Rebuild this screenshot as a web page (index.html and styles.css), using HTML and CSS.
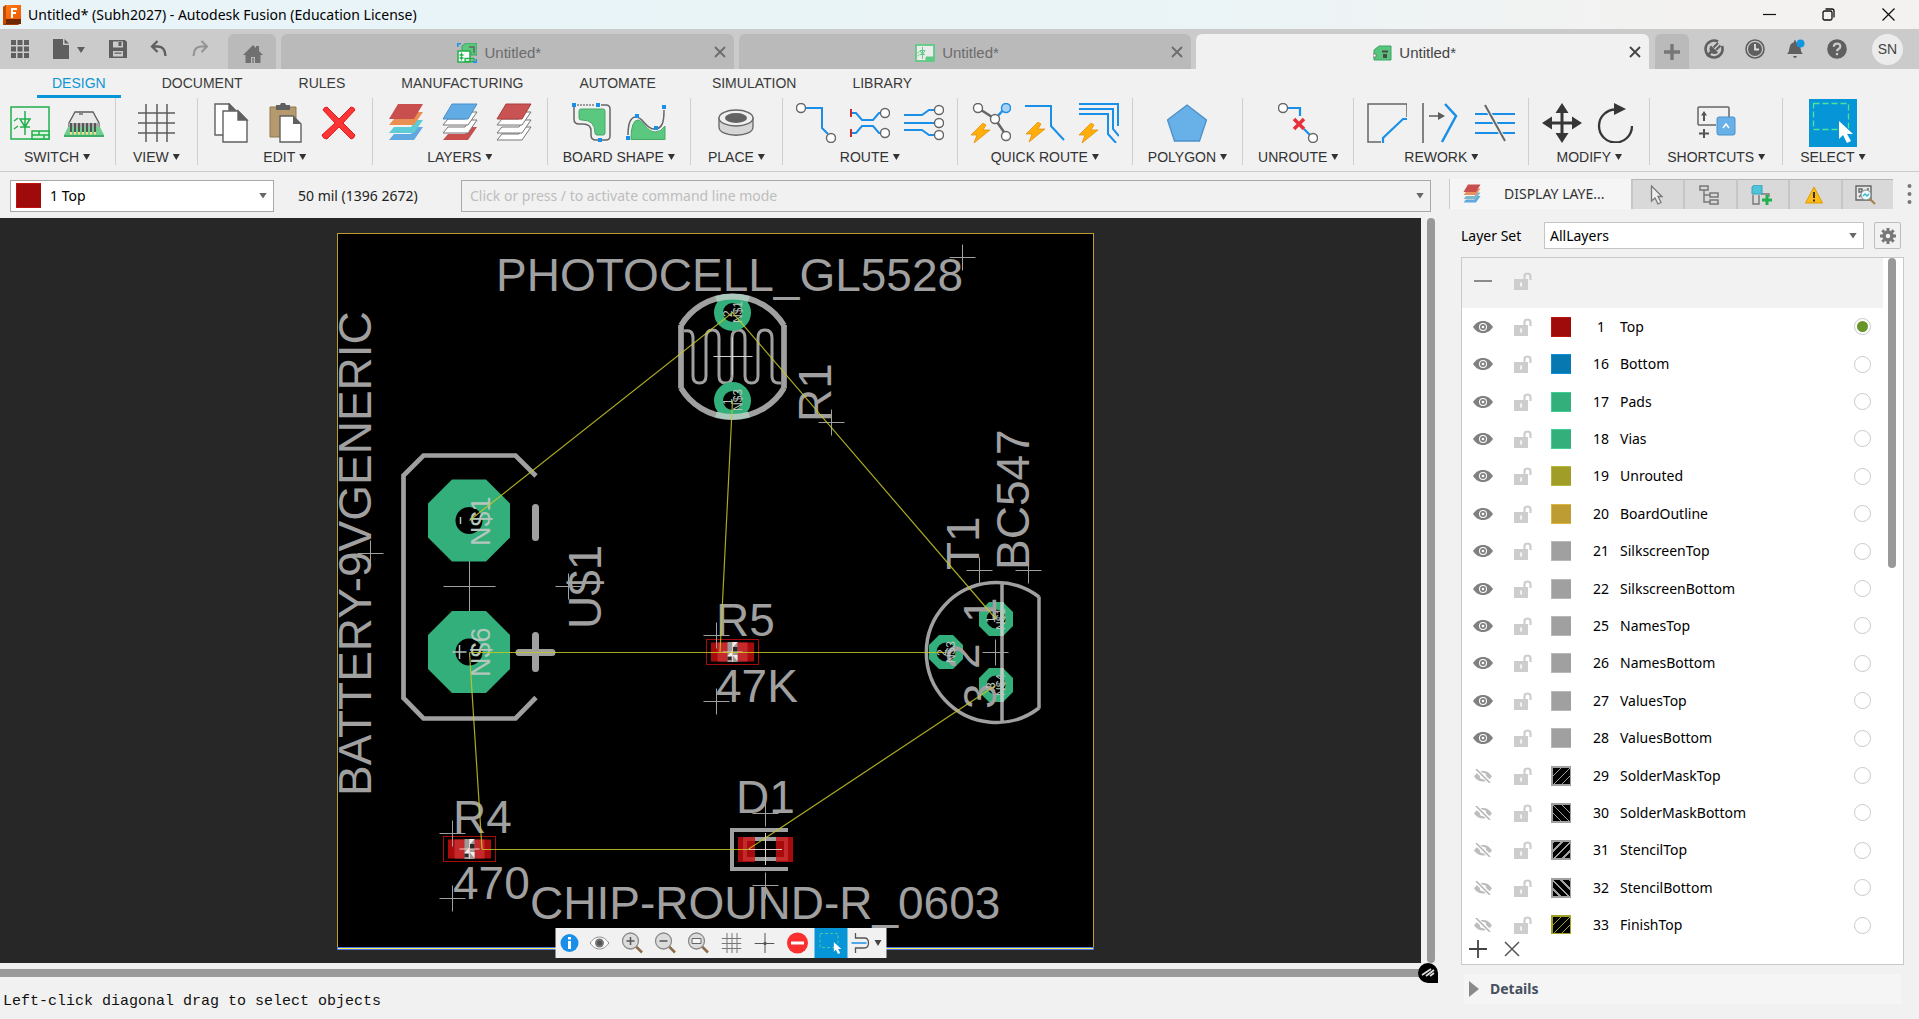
FILE: index.html
```html
<!DOCTYPE html>
<html lang="en">
<head>
<meta charset="utf-8">
<title>Untitled* (Subh2027) - Autodesk Fusion (Education License)</title>
<link rel="stylesheet" href="styles.css">
</head>
<body>
<svg class="defs" aria-hidden="true">
  <defs>
    <linearGradient id="appOrange" x1="0" y1="0" x2="1" y2="1"><stop offset="0" stop-color="#ff7a1a"/><stop offset="1" stop-color="#f05a00"/></linearGradient>
    <symbol id="eye" viewBox="0 0 20 14"><path d="M0 7C3 2.500 6.500 1 10 1s7 1.500 10 6c-3 4.500-6.500 6-10 6S3 11.500 0 7z" fill="#808080"/><circle cx="10" cy="7" r="4" fill="#fff"/><circle cx="10" cy="7" r="3" fill="#808080"/><circle cx="10" cy="7" r="1.300" fill="#fff"/></symbol>
    <symbol id="eyeoff" viewBox="0 0 20 14"><path d="M1 7.500C4 3 7 2 10 2s6 1 9 5.500C16 11.500 13 12.500 10 12.500S4 11.500 1 7.500z" fill="#bdbdbd"/><circle cx="10" cy="7" r="3.200" fill="#fff"/><circle cx="10" cy="7" r="2" fill="#bdbdbd"/><path d="M2 0l16 14" stroke="#fff" stroke-width="4"/><path d="M3 0l14 14" stroke="#b5b5b5" stroke-width="1.500"/></symbol>
    <symbol id="lock" viewBox="0 0 18 18"><path d="M0 7h14v11H0z" fill="#cdcdcd"/><path d="M10.500 7V4.500a3 3 0 0 1 6 0V8" fill="none" stroke="#cdcdcd" stroke-width="2.200"/><path d="M6.300 10.500h1.600v4H6.300z" fill="#fff"/></symbol>
    <symbol id="bolt" viewBox="0 0 19 20"><path d="M12 0L0 12h6L3 20 19 7h-7l3-5z" fill="#ffae0a" stroke="#e08a00" stroke-width=".7"/></symbol>
    <symbol id="strip" viewBox="0 0 40 16"><path d="M30 1h7l-9 13H3l5-6h17z"/></symbol>
    <symbol id="cursor" viewBox="0 0 14 22"><path d="M0 0v18l4-4 4 8 4-2-4-7h6z"/></symbol>
    <symbol id="mag" viewBox="0 0 22 22"><path d="M14 14l6.500 6.500" stroke="#8c6a45" stroke-width="2.500"/><circle cx="9" cy="9" r="8" fill="#dcdcdc" stroke="#8a8a8a" stroke-width="1.300"/></symbol>
    <symbol id="x" viewBox="0 0 12 12"><path d="M1 1l10 10M11 1L1 11" fill="none" stroke="currentColor" stroke-width="1.800"/></symbol>
  </defs>
</svg>

<header class="titlebar">
  <svg class="app-icon" width="18" height="20" viewBox="0 0 18 20"><path d="M0 2l3-2h15v18l-3 2H0z" fill="#a33c00"/><path d="M3 0h15v14H3z" fill="url(#appOrange)"/><path d="M0 2l3-2v18l-3 2z" fill="#c84a00"/><path d="M3 14h15v5H3z" fill="#6d2800"/><path d="M8 3h6v2h-4v2h3v2h-3v4H8z" fill="#fff"/></svg>
  <h1>Untitled* (Subh2027) - Autodesk Fusion (Education License)</h1>
  <div class="window-controls">
    <button type="button" aria-label="Minimize"><svg width="13" height="13"><path d="M0 6.500h13" stroke="#111" stroke-width="1.200"/></svg></button>
    <button type="button" aria-label="Restore"><svg width="13" height="13" fill="none" stroke="#111" stroke-width="1.300"><rect x="1" y="3" width="9" height="9" rx="1.500"/><path d="M3.500 1h6.500q2 0 2 2v6.500"/></svg></button>
    <button type="button" aria-label="Close"><svg width="13" height="13"><path d="M.5.500l12 12M12.500.500l-12 12" stroke="#111" stroke-width="1.300"/></svg></button>
  </div>
</header>

<div class="tabbar">
  <div class="quick">
    <button type="button" class="q-grid" aria-label="Data panel"><svg width="18" height="18" fill="#5f5f5f"><path d="M0 0h5v5H0zM6.500 0h5v5h-5zM13 0h5v5h-5zM0 6.500h5v5H0zM6.500 6.500h5v5h-5zM13 6.500h5v5h-5zM0 13h5v5H0zM6.500 13h5v5h-5zM13 13h5v5h-5z"/></svg></button>
    <button type="button" class="q-file" aria-label="File"><svg width="32" height="20" fill="#5f5f5f"><path d="M0 0h10v6h6v14H0zM11.500 0L16 4.500h-4.500zM24 8h8l-4 6z"/></svg></button>
    <button type="button" class="q-item" aria-label="Save"><svg width="18" height="18"><path d="M0 0h16l2 2v16H0z" fill="#5f5f5f"/><path d="M4 1.500h10v6H4zM4 11h10v5.500H4z" fill="#cbcbcb"/><path d="M9.500 2h3v4h-3zM5.500 12.500h7v1.200h-7z" fill="#5f5f5f"/></svg></button>
    <button type="button" class="q-item" aria-label="Undo"><svg width="18" height="18" fill="none" stroke="#5f5f5f" stroke-width="2.300"><path d="M7.500 1L2 6.500 7.500 12M2 6.500h6q7 0 7.500 9.500"/></svg></button>
    <button type="button" class="q-item" aria-label="Redo"><svg width="18" height="18" fill="none" stroke="#929292" stroke-width="2"><path d="M10.500 1L16 6.500 10.500 12M16 6.500h-6q-7 0-7.500 9.500"/></svg></button>
  </div>
  <button type="button" class="home" aria-label="Home"><svg width="20" height="18" fill="#707070"><path d="M10 0l3 3V1h3v5l4 4h-2.500v8H2.500v-8H0z"/><path d="M8 12h4v6H8z" fill="#bababa"/><path d="M9.300 13h1.400v5H9.300z"/></svg></button>
  <div class="tabs">
    <div class="tab">
      <div class="tab-label"><svg width="20" height="20" fill="none"><path d="M5 3l4-3h11v12h-6V9H5z" fill="#5bc87f" stroke="#3d9f62"/><path d="M12 4h5v6" stroke="#666" stroke-width="1.500"/><path d="M1 8h12v11H1z" fill="#fff" stroke="#22b04c" stroke-width="1.500"/><path d="M4.500 9.500v8M2.500 12h4M2.500 15h4M8 15.500h9v3H8z" stroke="#22b04c" stroke-width="1.300"/><path d="M.7 4V.7H4M19.300 16v3.300H16" stroke="#1a92ea" stroke-width="1.500"/></svg><span>Untitled*</span></div>
      <button type="button" aria-label="Close tab"><svg width="12" height="12"><use href="#x"/></svg></button>
    </div>
    <div class="tab">
      <div class="tab-label"><svg width="20" height="18" fill="none" stroke="#5ecb85"><rect x="1" y="1" width="18" height="16" fill="#ececec" stroke-width="1.800"/><path d="M7.500 3v12M5 6.500h5l-2.500 4zM5 10.500h5M2.500 9l2-1.500M2.500 12l2-1.500"/><path d="M11 13h8v4h-8z" fill="#5ecb85"/></svg><span>Untitled*</span></div>
      <button type="button" aria-label="Close tab"><svg width="12" height="12"><use href="#x"/></svg></button>
    </div>
    <div class="tab active">
      <div class="tab-label"><svg width="19" height="16"><path d="M1 5l5-4h12v14H1z" fill="#58c57c" stroke="#3fa465"/><path d="M9 5.500h6v2H9z" fill="#4a4a4a"/><path d="M10 9h4v4h-4z" fill="#4a4a4a"/><path d="M0 9h3v3H0z" fill="#fff" stroke="#666" stroke-width=".7"/></svg><span>Untitled*</span></div>
      <button type="button" aria-label="Close tab"><svg width="12" height="12"><use href="#x"/></svg></button>
    </div>
  </div>
  <button type="button" class="newtab" aria-label="New tab"><svg width="16" height="16"><path d="M6.300 0h3.400v6.300H16v3.400H9.700V16H6.300V9.700H0V6.300h6.300z" fill="#777"/></svg></button>
  <div class="account">
    <button type="button" aria-label="Extensions"><svg width="20" height="20" viewBox="0 0 20 20"><path d="M14 2.500A8.500 8.500 0 1 0 18 7" fill="none" stroke="#5f5f5f" stroke-width="2.600"/><path d="M3 17l5-5" stroke="#5f5f5f" stroke-width="2.500"/><path d="M7 6.500l7 7c-2.500 2.500-5.500 1.500-7 0s-2.500-4.500 0-7z" fill="#5f5f5f"/><path d="M9.500 8.500L14 4M12 11l4.500-4.500" stroke="#5f5f5f" stroke-width="2"/></svg></button>
    <button type="button" aria-label="Job status"><svg width="20" height="20" viewBox="0 0 20 20" fill="none" stroke="#5f5f5f"><circle cx="10" cy="10" r="9" stroke-width="1.600"/><circle cx="10" cy="10" r="7" fill="#5f5f5f" stroke="none"/><path d="M10 5v5.500h4" stroke="#e0e0e0" stroke-width="1.800"/></svg></button>
    <button type="button" aria-label="Notifications"><svg width="20" height="20" viewBox="0 0 20 20"><path d="M1 15c2.500-2 2-5 3-8 .6-2.300 2.200-3.500 4-3.800V1.500h2v1.700c2 .3 3.500 1.500 4 3.800 1 3 .5 6 3 8zM7 17h4q-.5 2-2 2t-2-2z" fill="#5f5f5f"/><circle cx="14.500" cy="4.500" r="4" fill="#0f97e0"/></svg></button>
    <button type="button" aria-label="Help"><svg width="20" height="20" viewBox="0 0 20 20"><circle cx="10" cy="10" r="9.800" fill="#5f5f5f"/><path d="M6.800 7.800q0-3.200 3.300-3.200t3.200 2.900q0 1.500-1.800 2.500-1.500 1-1.500 2.300M10 14v2.300" fill="none" stroke="#cbcbcb" stroke-width="2.200"/></svg></button>
    <button type="button" class="avatar">SN</button>
  </div>
</div>

<nav class="menu">
  <a href="#design" class="current">DESIGN</a>
  <a href="#document">DOCUMENT</a>
  <a href="#rules">RULES</a>
  <a href="#manufacturing">MANUFACTURING</a>
  <a href="#automate">AUTOMATE</a>
  <a href="#simulation">SIMULATION</a>
  <a href="#library">LIBRARY</a>
</nav>

<div class="ribbon">
  <section class="group">
    <div class="icons">
      <button type="button" aria-label="Schematic"><svg viewBox="0 0 40 40" fill="none" stroke="#22b04c" stroke-width="1.500"><rect x="1" y="4" width="38" height="32"/><path d="M15 8v24M10 16h10l-5 8zM10 24h10M4 18l4-3M4 26l4-3" /><path d="M22 28h17v8H22zM22 32h17M29 28v4M34 32v4" fill="#d9f5e0"/></svg></button>
      <button type="button" aria-label="3D PCB"><svg viewBox="0 0 40 40"><path d="M5 22h30l5 10H0z" fill="#6fcf8e"/><path d="M0 32h40v2H0z" fill="#3fae68"/><path d="M6 30h28" stroke="#ffe08a" stroke-width="3" stroke-dasharray="2 2"/><path d="M11 9h18l6 11v3H5v-3z" fill="#e9e9e9" stroke="#5c5c5c" stroke-width="1.300"/><path d="M15 11h4" stroke="#333"/><path d="M5 20h30v4H5z" fill="#aaa"/><path d="M7 20v9M11 20v9M15 20v9M19 20v9M23 20v9M27 20v9M31 20v9" stroke="#555" stroke-width="2"/></svg></button>
    </div>
    <button type="button" class="label">SWITCH</button>
  </section>
  <section class="group single">
    <div class="icons">
      <button type="button" aria-label="Grid"><svg viewBox="0 0 40 40" stroke="#5c5c5c" stroke-width="1.500"><path d="M10 1v38M21 1v38M31 1v38M2 10h37M2 20h37M2 30h37"/></svg></button>
    </div>
    <button type="button" class="label">VIEW</button>
  </section>
  <section class="group">
    <div class="icons">
      <button type="button" aria-label="Copy"><svg viewBox="0 0 40 40" fill="#fff" stroke="#606060" stroke-width="1.400"><path d="M4 1h14l6 6v25H4z"/><path d="M18 1l6 6h-6z" fill="#606060"/><path d="M12 8h15l9 9v22H12z"/><path d="M27 8l9 9h-9z" fill="#606060"/></svg></button>
      <button type="button" aria-label="Paste"><svg viewBox="0 0 40 40"><path d="M5 4h26v30H5z" fill="#b59a6e" stroke="#8f7750"/><path d="M11 2h4l1-2h4l1 2h4v5H11z" fill="#606060"/><path d="M15 13h13l8 8v18H15z" fill="#fff" stroke="#606060" stroke-width="1.400"/><path d="M28 13l8 8h-8z" fill="#606060"/></svg></button>
      <button type="button" aria-label="Delete"><svg viewBox="0 0 40 40"><path d="M4 7q1-3 4-3l12 12L32 4q3 0 4 3L24 20l12 12q-1 4-4 4L20 24 8 36q-4 0-5-4l13-12z" fill="#fb3535" stroke="#e01c1c"/></svg></button>
    </div>
    <button type="button" class="label">EDIT</button>
  </section>
  <section class="group">
    <div class="icons">
      <button type="button" aria-label="Layers"><svg viewBox="0 0 40 40"><use href="#strip" y="23" height="16" width="40" fill="#5fa8e0"/><use href="#strip" y="16" height="16" width="40" fill="#5fcbd6"/><use href="#strip" y="8" height="16" width="40" fill="#ea8f52"/><path d="M12 1h25l-9 15H3z" fill="#c94f4f"/></svg></button>
      <button type="button" aria-label="Flip layers"><svg viewBox="0 0 40 40" stroke="#777"><use href="#strip" y="23" height="16" width="40" fill="#c94f4f" stroke="none"/><use href="#strip" y="16" height="16" width="40" fill="#fff"/><use href="#strip" y="8" height="16" width="40" fill="#fff"/><path d="M12 1h25l-9 15H3z" fill="#62ace6" stroke="#4a8fc8"/></svg></button>
      <button type="button" aria-label="Single layer"><svg viewBox="0 0 40 40" stroke="#777"><use href="#strip" y="23" height="16" width="40" fill="#fff"/><use href="#strip" y="16" height="16" width="40" fill="#fff"/><use href="#strip" y="8" height="16" width="40" fill="#fff"/><path d="M12 1h25l-9 15H3z" fill="#c95252" stroke="#a94040"/></svg></button>
    </div>
    <button type="button" class="label">LAYERS</button>
  </section>
  <section class="group">
    <div class="icons">
      <button type="button" aria-label="Outline polyline"><svg viewBox="0 0 40 40" fill="none"><path d="M5 2h18" stroke="#444" stroke-dasharray="2 1"/><path d="M29 2h5q4 0 4 4v27q0 4-4 4H24q-5 0-5-5v-4q0-7-8-7H7q-5 0-5-5V4" stroke="#666" stroke-width="1.500"/><path d="M9 6h22q2 0 2 2v22q0 2-2 2h-6q-2 0-2-2q0-13-13-13H9q-2 0-2-2V8q0-2 2-2z" fill="#5bc87f" stroke="#47a869"/><path d="M0 0h4v4H0zM24 0h4v4h-4zM26 35h4v4h-4z" fill="#1a8fe8"/></svg></button>
      <button type="button" aria-label="Outline spline"><svg viewBox="0 0 40 40" fill="none"><path d="M5 36.500Q5 17 12 17c5 0 9 12 17 12q6 0 10-6v13.500z" fill="#5bc87f" stroke="#47a869"/><path d="M2 32q0-18 8-18c7 0 10 12 18 12 9 0 10-8 10-19" stroke="#666" stroke-width="1.500"/><path d="M0 33h4v4H0zM9 11h4v4H9zM28 23h4v4h-4zM36 2h4v4h-4z" fill="#1a8fe8"/></svg></button>
    </div>
    <button type="button" class="label">BOARD SHAPE</button>
  </section>
  <section class="group single">
    <div class="icons">
      <button type="button" aria-label="Hole"><svg viewBox="0 0 40 40"><path d="M3 15v9c0 11 34 11 34 0v-9z" fill="#d6d6d6" stroke="#666" stroke-width="1.300"/><ellipse cx="20" cy="15" rx="17" ry="8" fill="#f0f0f0" stroke="#666" stroke-width="1.300"/><ellipse cx="20" cy="15" rx="11" ry="5" fill="#636363"/></svg></button>
    </div>
    <button type="button" class="label">PLACE</button>
  </section>
  <section class="group">
    <div class="icons">
      <button type="button" aria-label="Route manual"><svg viewBox="0 0 40 40" fill="none" stroke="#1a8fe8" stroke-width="2"><path d="M10 5h16v20l6 6"/><g fill="#fff" stroke="#666" stroke-width="1.400"><circle cx="5" cy="5" r="4.500"/><circle cx="35" cy="35" r="4.500"/></g></svg></button>
      <button type="button" aria-label="Route pair"><svg viewBox="0 0 40 40" fill="none" stroke="#1a8fe8" stroke-width="2"><path d="M2 10h4l6 7h11l6-7h2M2 30h4l6-7h11l6 7h2"/><path d="M1 6v8M1 26v8" stroke="#cc2a2a"/><g fill="#fff" stroke="#666" stroke-width="1.400"><circle cx="35" cy="10" r="4.500"/><circle cx="35" cy="30" r="4.500"/></g></svg></button>
      <button type="button" aria-label="Route multiple"><svg viewBox="0 0 40 40" fill="none" stroke="#1a8fe8" stroke-width="2"><path d="M0 12h18l7-5h6M0 20h31M0 27h18l7 5h6"/><g fill="#fff" stroke="#666" stroke-width="1.400"><circle cx="35" cy="7" r="4.500"/><circle cx="35" cy="20" r="4.500"/><circle cx="35" cy="32" r="4.500"/></g></svg></button>
    </div>
    <button type="button" class="label">ROUTE</button>
  </section>
  <section class="group">
    <div class="icons">
      <button type="button" aria-label="Quick route airwire"><svg viewBox="0 0 40 40" fill="none" stroke="#666" stroke-width="2.500"><path d="M7 5l17 11 11 16"/><path d="M24 16L34 5" stroke="#1a8fe8"/><g fill="#fff" stroke-width="1.400"><circle cx="7" cy="5" r="4.500"/><circle cx="24" cy="16" r="4.500"/><circle cx="35" cy="33" r="4.500"/><circle cx="35" cy="5" r="4.500" fill="#a9d3f5" stroke="#1a8fe8"/></g><use href="#bolt" x="0" y="20" width="19" height="20" /></svg></button>
      <button type="button" aria-label="Quick route signal"><svg viewBox="0 0 40 40" fill="none" stroke="#1a8fe8" stroke-width="2"><path d="M0 3h26v20l13 14"/><use href="#bolt" x="1" y="19" width="19" height="20"/></svg></button>
      <button type="button" aria-label="Quick route bus"><svg viewBox="0 0 40 40" fill="none" stroke="#1a8fe8" stroke-width="2"><path d="M0 1h39v22M0 6h34v20l6 7M0 11h29v20l8 9"/><use href="#bolt" x="0" y="20" width="19" height="20"/></svg></button>
    </div>
    <button type="button" class="label">QUICK ROUTE</button>
  </section>
  <section class="group">
    <div class="icons">
      <button type="button" aria-label="Polygon"><svg viewBox="0 0 40 40"><path d="M20 2l19.500 15-7 21h-25l-7-21z" fill="#67b0e8" stroke="#4b90c9" stroke-width="1.300"/></svg></button>
    </div>
    <button type="button" class="label">POLYGON</button>
  </section>
  <section class="group">
    <div class="icons">
      <button type="button" aria-label="Unroute"><svg viewBox="0 0 40 40" fill="none"><path d="M10 5h12v8M26 26l6 6" stroke="#1a8fe8" stroke-width="2.200"/><g fill="#fff" stroke="#666" stroke-width="1.400"><circle cx="5" cy="5" r="4.500"/><circle cx="35" cy="35" r="4.500"/></g><path d="M16 16l10 10M26 16L16 26" stroke="#e8303a" stroke-width="3.500"/></svg></button>
    </div>
    <button type="button" class="label">UNROUTE</button>
  </section>
  <section class="group">
    <div class="icons">
      <button type="button" aria-label="Miter"><svg viewBox="0 0 40 40" fill="none"><path d="M40 14V1H1v38h13" stroke="#666" stroke-width="1.500"/><path d="M40 16h-4L16 35v5" stroke="#1a8fe8" stroke-width="2.200"/></svg></button>
      <button type="button" aria-label="Slide"><svg viewBox="0 0 40 40" fill="none"><path d="M2 0v40M8 13h12" stroke="#5c5c5c" stroke-width="1.500"/><path d="M17 9l7 4-7 4z" fill="#5c5c5c"/><path d="M24 1l11 12-14 26" stroke="#1a8fe8" stroke-width="2.500"/></svg></button>
      <button type="button" aria-label="Rip up"><svg viewBox="0 0 40 40" fill="none"><path d="M0 11h40M0 20h40M0 30h40" stroke="#1a8fe8" stroke-width="2"/><path d="M10 2l20 36" stroke="#f1f1f1" stroke-width="4"/><path d="M10 2l20 36" stroke="#666" stroke-width="2"/></svg></button>
    </div>
    <button type="button" class="label">REWORK</button>
  </section>
  <section class="group">
    <div class="icons">
      <button type="button" aria-label="Move"><svg viewBox="0 0 40 40"><path d="M20 0l6.500 10h-5v8.500H30v-5L40 20l-10 6.500v-5h-8.500V30h5L20 40l-6.500-10h5v-8.500H10v5L0 20l10-6.500v5h8.500V10h-5z" fill="#363636"/></svg></button>
      <button type="button" aria-label="Rotate"><svg viewBox="0 0 40 40"><path d="M20 6.500A16.500 16.500 0 1 0 36 23" fill="none" stroke="#363636" stroke-width="2.300"/><path d="M18 0l12 6-12 6z" fill="#363636"/></svg></button>
    </div>
    <button type="button" class="label">MODIFY</button>
  </section>
  <section class="group single">
    <div class="icons">
      <button type="button" aria-label="Shortcuts"><svg viewBox="0 0 40 40" fill="none"><path d="M33 14V5q0-1-1-1H3q-1 0-1 1v16q0 1 1 1h17" stroke="#666" stroke-width="1.500"/><path d="M8 18v-8M8 26v9M3 30.500h10" stroke="#555" stroke-width="2"/><path d="M5 12.500L8 8l3 4.500z" fill="#555"/><rect x="21" y="14" width="18" height="18" rx="2" fill="#67b0e8" stroke="#4b90c9"/><path d="M27 25l3-4 3 4" stroke="#fff" stroke-width="1.500"/></svg></button>
    </div>
    <button type="button" class="label">SHORTCUTS</button>
  </section>
  <section class="group">
    <div class="icons">
      <button type="button" class="picked" aria-label="Select"><svg class="wide" viewBox="0 0 48 48"><path d="M4.500 4.500h35v26h-35z" fill="none" stroke="#4fe39a" stroke-width="1.300" stroke-dasharray="6 3"/><use href="#cursor" x="30" y="22" width="14" height="22" fill="#fff"/></svg></button>
    </div>
    <button type="button" class="label">SELECT</button>
  </section>
</div>

<main class="workspace">
  <section class="editor">
    <div class="parambar">
      <button type="button" class="combo" aria-label="Active layer"><span class="swatch top"></span><span>1 Top</span><i class="caret"></i></button>
      <output>50 mil (1396 2672)</output>
      <div class="command"><input type="text" aria-label="Command line" placeholder="Click or press / to activate command line mode"><i class="caret"></i></div>
    </div>
    <div class="viewport">
      <div class="canvas">
        <svg class="board" viewBox="0 218 1421 745" preserveAspectRatio="xMidYMid meet" role="img" aria-label="Board layout">
          <defs>
            <path id="cross" d="M-13 0h26M0-13v26" stroke="#a0a0a0" stroke-width="1"/>
            <path id="oct" fill-rule="evenodd" d="M-17 -41h34l24 24v34l-24 24h-34l-24-24v-34z M13.500 0a13.500 13.500 0 1 0-27 0a13.500 13.500 0 1 0 27 0z" fill="#33af7b"/>
            <path id="octS" fill-rule="evenodd" d="M-7-17H7L17-7V7L7 17H-7L-17 7V-7z M9.500 0a9.500 9.500 0 1 0-19 0a9.500 9.500 0 1 0 19 0z" fill="#33af7b"/>
            <g id="chip"><rect x="-26" y="-12.500" width="52" height="25" fill="none" stroke="#a80b0b"/><rect x="-21.500" y="-9.500" width="43" height="19" fill="#a80b0b"/><rect x="-15" y="-9.500" width="30" height="19" fill="#c42a2c"/><rect x="-5" y="-10" width="10" height="20" fill="#9a9a9a"/><path d="M-5 4L0-2v6zM0-10h5l-5 6zM0 3l5 6v-6z" fill="#eee"/><path d="M0-5h5v5H0zM-5 5h4v3h-4z" fill="#2a2a2a"/><path d="M-10 0h20M0-10v20" stroke="#f3c9c0"/></g>
          </defs>
          <rect x="337.500" y="233.500" width="756" height="715" fill="#000" stroke="#bd9d33"/>
          <path d="M337 948.500h757" stroke="#4a74e8" stroke-width="3"/><path d="M338 948.500h755" stroke="#fff04a"/>

          <g class="silk" fill="none" stroke="#a0a0a0">
            <path d="M536 476l-20.500-20.500h-92l-20 20V698l20 20.500h92L536 697.500" stroke-width="4.700"/>
            <path d="M535.500 507.500v30M535.500 635.500v33M519 652.500h33" stroke-width="7" stroke-linecap="round"/>
            <path d="M469.500 561v52M443.500 586.500h52" stroke-width="1"/>
            <path d="M681 325v63.500M784 325v63.500M681 325.500a60 60 0 0 1 103 0M681 388a60 60 0 0 0 103 0" stroke-width="5.700"/>
            <path d="M684 331q9-2 9 7v38q0 7 6.500 7t6.500-7v-38q0-8 6.500-8t6.500 8v38q0 7 6.500 7t6.500-7v-38q0-8 6.500-8t6.500 8v38q0 7 6.500 7t6.500-7v-38q0-8 7-8t7 8v38q0 8 9 7" stroke-width="3"/>
            <path d="M713.500 356.500h39M732.500 337v38" stroke="#d0d0d0" stroke-width="1"/>
            <path d="M1039 596.500v112M1039 597a70 70 0 1 0 0 111M1002 583v139" stroke-width="3.500"/>
            <path d="M788 830h-56v39h56M743 839h44v20h-44z" stroke-width="4"/>
          </g>

          <g class="silk-text">
            <text x="496" y="291">PHOTOCELL_GL5528</text>
            <text transform="translate(371 796) rotate(-90)">BATTERY-9VGENERIC</text>
            <text transform="translate(601 629) rotate(-90)">U$1</text>
            <text transform="translate(831 422) rotate(-90)">R1</text>
            <text transform="translate(979 570) rotate(-90)">T1</text>
            <text transform="translate(1029 570) rotate(-90)">BC547</text>
            <text x="453" y="833">R4</text>
            <text x="453" y="899">470</text>
            <text x="530" y="919">CHIP-ROUND-R_0603</text>
            <text x="716" y="636">R5</text>
            <text x="716" y="702">47K</text>
            <text x="736" y="813">D1</text>
          </g>

          <use href="#oct" x="469" y="520.500"/>
          <use href="#oct" x="469" y="652"/>
          <g fill="none" stroke="#33af7b" stroke-width="9"><circle cx="732.500" cy="312.500" r="14"/><circle cx="732.500" cy="400.500" r="14"/></g>
          <path d="M716 299a60 60 0 0 1 33 0M716 414.500a60 60 0 0 0 33 0" fill="none" stroke="#abc9bd" stroke-width="5.700"/>
          <use href="#octS" x="996" y="619"/><use href="#octS" x="946" y="652"/><use href="#octS" x="996" y="685"/>
          <path d="M1002 602v34M1002 668v34" stroke="#b9cfc5" stroke-width="3.500"/>
          <g class="silk-text"><text transform="translate(995.500 623) rotate(-90)">1</text><text transform="translate(979 669) rotate(-90)">2</text><text transform="translate(995.500 709) rotate(-90)">3</text></g>

          <g class="net-text">
            <text transform="translate(490 546) rotate(-90)">N$1</text>
            <text transform="translate(490 677) rotate(-90)">N$6</text>
            <path d="M460.500 517v7M452.500 652h14M459.500 645v14" stroke="#b4c6be" stroke-width="1.500"/>
          </g>
          <g class="pin-text">
            <text transform="translate(742 323) rotate(-90)">N$1</text><text transform="translate(732 317) rotate(-90)">2</text>
            <text transform="translate(742 411) rotate(-90)">N$3</text><text transform="translate(732 405) rotate(-90)">1</text>
            <text transform="translate(1005 630) rotate(-90)">N$1</text><text transform="translate(995 623) rotate(-90)">1</text>
            <text transform="translate(955 663) rotate(-90)">N$3</text><text transform="translate(946 656) rotate(-90)">2</text>
            <text transform="translate(1005 696) rotate(-90)">N$4</text><text transform="translate(995 689) rotate(-90)">3</text>
          </g>

          <use href="#chip" x="469.500" y="849"/><use href="#chip" x="732.500" y="652"/>
          <path d="M738 837h17v25h-17zM776 837h17v25h-17z" fill="#a80b0b"/>
          <path d="M755 839h-10v20h10M776 839h10v20h-10" fill="none" stroke="#c42a2c" stroke-width="4"/>
          <path d="M749 849.500h33M765.500 833v32" stroke="#e0cfc8"/>

          <use href="#cross" x="962.500" y="257.500"/><use href="#cross" x="831.500" y="422.500"/><use href="#cross" x="568.500" y="586.500"/><use href="#cross" x="370.500" y="553.500"/>
          <use href="#cross" x="452.500" y="833.500"/><use href="#cross" x="452.500" y="898.500"/><use href="#cross" x="716.500" y="635.500"/><use href="#cross" x="716.500" y="701.500"/>
          <use href="#cross" x="979.500" y="570.500"/><use href="#cross" x="1028.500" y="570.500"/><use href="#cross" x="765.500" y="813.500"/><use href="#cross" x="765.500" y="885.500"/><use href="#cross" x="995.500" y="652.500"/>

          <path class="airwire" d="M469.500 520.500L732.500 312.500 995.500 618.500M732.500 400.500L720 652.500M469.500 652.500H946M469.500 652.500L482 849M482 849.500H748L995.500 685.500"/>
        </svg>
        <div class="floatbar">
          <button type="button" class="first" aria-label="Info"><svg width="20" height="20"><circle cx="10" cy="10" r="9" fill="#1a8fe8"/><path d="M8.500 4h3v2.500h-3zM8.500 8h3v8h-3z" fill="#fff"/></svg></button>
          <button type="button" aria-label="Visibility"><svg width="20" height="14"><path d="M.7 7C6-1 14-1 19.300 7 14 15 6 15 .7 7z" fill="#fff" stroke="#8a8a8a"/><circle cx="10" cy="7" r="4.500" fill="#777"/><circle cx="10" cy="7" r="2.500" fill="#555"/></svg></button>
          <button type="button" aria-label="Zoom in"><svg width="22" height="22"><use href="#mag"/><path d="M9 5v8M5 9h8" stroke="#555" stroke-width="1.500"/></svg></button>
          <button type="button" aria-label="Zoom out"><svg width="22" height="22"><use href="#mag"/><path d="M5 9h8" stroke="#555" stroke-width="1.500"/></svg></button>
          <button type="button" aria-label="Zoom fit"><svg width="22" height="22"><use href="#mag"/><path d="M4.500 6.500h9v5h-9z" fill="#f4f4f4" stroke="#666"/></svg></button>
          <button type="button" aria-label="Grid"><svg width="20" height="20" stroke="#777"><path d="M5.500 0v20M10.500 0v20M15.500 0v20M0 5.500h20M0 10.500h20M0 15.500h20"/></svg></button>
          <button type="button" aria-label="Mark"><svg width="20" height="20" stroke="#555"><path d="M10.500 0v20M0 10.500h20"/><path d="M9.500 9.500h2v2h-2z" fill="#555"/></svg></button>
          <button type="button" aria-label="Stop"><svg width="22" height="22"><circle cx="11" cy="11" r="10.500" fill="#fb2f2f"/><path d="M4.500 9.500h13v3h-13z" fill="#fff"/></svg></button>
          <button type="button" class="picked" aria-label="Select"><svg width="24" height="22"><path d="M1.500 1.500h18v14h-18z" fill="none" stroke="#4fc3a5" stroke-dasharray="3 2"/><use href="#cursor" x="15" y="10" width="8" height="12" fill="#fff"/></svg></button>
          <button type="button" class="last" aria-label="Bend style"><svg width="32" height="20" fill="none"><path d="M5 0v5h9q4 0 4 5t-4 5H5v5" stroke="#555" stroke-width="1.300"/><path d="M1 10h15" stroke="#1a8fe8" stroke-width="1.500"/><path d="M24 7h7l-3.500 6z" fill="#444"/></svg></button>
        </div>
      </div>
      <div class="vscroll"><span></span></div>
    </div>
    <div class="hscroll"><span></span><svg class="badge" width="20" height="20"><path d="M10 0a10 10 0 0 1 10 10v10H10a10 10 0 0 1 0-20z" fill="#000"/><path d="M4 12l9-6M8 13l8-6M12 13l4-3" stroke="#ddd" stroke-width="1.800"/></svg></div>
    <footer class="status">Left-click diagonal drag to select objects</footer>
  </section>

  <aside class="panel">
    <div class="ptabs">
      <button type="button" class="ptab-active"><svg width="18" height="20" viewBox="2 0 36 40"><use href="#strip" y="23" height="16" width="40" fill="#5fa8e0"/><use href="#strip" y="16" height="16" width="40" fill="#7fb9c6"/><use href="#strip" y="8" height="16" width="40" fill="#ea8f62"/><path d="M12 1h25l-9 15H3z" fill="#c94f4f"/></svg><span>DISPLAY LAYE...</span></button>
      <button type="button" class="ptab" aria-label="Selection"><svg width="14" height="20"><path d="M1.500 1v15l3.500-3 3 6 3-1.500-3-6H12z" fill="#eee" stroke="#777" stroke-width="1.300"/></svg></button>
      <button type="button" class="ptab" aria-label="Inspector"><svg width="20" height="20" fill="none" stroke="#777" stroke-width="1.500"><path d="M1 1h8v4H1zM11 8h8v4h-8zM11 15h8v4h-8zM5 5v12h6M5 10h6"/></svg></button>
      <button type="button" class="ptab" aria-label="Add component"><svg width="22" height="20" fill="none"><path d="M2 10v9h6v-9M10 9h8v3" stroke="#777" stroke-width="1.400"/><path d="M1 2l2-2h8v9H1z" fill="#4fc3d9" stroke="#3aa3b8"/><path d="M16 10v10M11 15h10" stroke="#22b04c" stroke-width="3"/></svg></button>
      <button type="button" class="ptab" aria-label="Warnings"><svg width="18" height="18"><path d="M9 1l8.500 16H.5z" fill="#fdbb13" stroke="#e09c00"/><path d="M9 6v6M9 13.500v2" stroke="#333" stroke-width="2"/></svg></button>
      <button type="button" class="ptab" aria-label="Find"><svg width="22" height="20" fill="none"><path d="M1 1h15v14H1z" fill="#e6e6e6" stroke="#666" stroke-width="1.400"/><path d="M4 4h3v3H4zM4 12l3-3M12 4h2" stroke="#666" stroke-width="1.400"/><path d="M15 14l5 5" stroke="#a87c4b" stroke-width="2"/><circle cx="11" cy="10" r="5" fill="#e8fafc" stroke="#888"/><path d="M8 11l2-2 2 2 2-2" stroke="#34b6cc" stroke-width="1.300"/></svg></button>
      <button type="button" class="kebab" aria-label="More"><svg width="5" height="22" fill="#777"><circle cx="2.500" cy="3" r="2"/><circle cx="2.500" cy="11" r="2"/><circle cx="2.500" cy="19" r="2"/></svg></button>
    </div>
    <div class="layerset">
      <span id="lset">Layer Set</span>
      <button type="button" class="combo set" aria-labelledby="lset lval"><span id="lval">AllLayers</span><i class="caret"></i></button>
      <button type="button" class="gear" aria-label="Settings"><svg width="16" height="16" viewBox="-8 -8 16 16"><circle r="4" fill="none" stroke="#777" stroke-width="3.500"/><path d="M0-8v3M0 8V5M-8 0h3M8 0H5M-5.700-5.700l2 2M5.700 5.700l-2-2M-5.700 5.700l2-2M5.700-5.700l-2 2" stroke="#777" stroke-width="3"/></svg></button>
    </div>
    <div class="layers">
      <div class="scroller">
        <div class="list">
          <div class="list-head"><svg class="c-eye" width="18" height="2"><path d="M0 0h18v2H0z" fill="#8a8a8a"/></svg><svg width="18" height="18"><use href="#lock"/></svg></div>
          <table>
            <tbody>
              <tr><td><svg class="eye"><use href="#eye"/></svg></td><td><svg class="lock"><use href="#lock"/></svg></td><td><span class="swatch top"></span></td><td>1</td><td><label for="l1">Top</label></td><td><input type="radio" name="layer" id="l1" checked></td></tr>
              <tr><td><svg class="eye"><use href="#eye"/></svg></td><td><svg class="lock"><use href="#lock"/></svg></td><td><span class="swatch bottom"></span></td><td>16</td><td><label for="l16">Bottom</label></td><td><input type="radio" name="layer" id="l16"></td></tr>
              <tr><td><svg class="eye"><use href="#eye"/></svg></td><td><svg class="lock"><use href="#lock"/></svg></td><td><span class="swatch pads"></span></td><td>17</td><td><label for="l17">Pads</label></td><td><input type="radio" name="layer" id="l17"></td></tr>
              <tr><td><svg class="eye"><use href="#eye"/></svg></td><td><svg class="lock"><use href="#lock"/></svg></td><td><span class="swatch pads"></span></td><td>18</td><td><label for="l18">Vias</label></td><td><input type="radio" name="layer" id="l18"></td></tr>
              <tr><td><svg class="eye"><use href="#eye"/></svg></td><td><svg class="lock"><use href="#lock"/></svg></td><td><span class="swatch unrouted"></span></td><td>19</td><td><label for="l19">Unrouted</label></td><td><input type="radio" name="layer" id="l19"></td></tr>
              <tr><td><svg class="eye"><use href="#eye"/></svg></td><td><svg class="lock"><use href="#lock"/></svg></td><td><span class="swatch outline"></span></td><td>20</td><td><label for="l20">BoardOutline</label></td><td><input type="radio" name="layer" id="l20"></td></tr>
              <tr><td><svg class="eye"><use href="#eye"/></svg></td><td><svg class="lock"><use href="#lock"/></svg></td><td><span class="swatch grey"></span></td><td>21</td><td><label for="l21">SilkscreenTop</label></td><td><input type="radio" name="layer" id="l21"></td></tr>
              <tr><td><svg class="eye"><use href="#eye"/></svg></td><td><svg class="lock"><use href="#lock"/></svg></td><td><span class="swatch grey"></span></td><td>22</td><td><label for="l22">SilkscreenBottom</label></td><td><input type="radio" name="layer" id="l22"></td></tr>
              <tr><td><svg class="eye"><use href="#eye"/></svg></td><td><svg class="lock"><use href="#lock"/></svg></td><td><span class="swatch grey"></span></td><td>25</td><td><label for="l25">NamesTop</label></td><td><input type="radio" name="layer" id="l25"></td></tr>
              <tr><td><svg class="eye"><use href="#eye"/></svg></td><td><svg class="lock"><use href="#lock"/></svg></td><td><span class="swatch grey"></span></td><td>26</td><td><label for="l26">NamesBottom</label></td><td><input type="radio" name="layer" id="l26"></td></tr>
              <tr><td><svg class="eye"><use href="#eye"/></svg></td><td><svg class="lock"><use href="#lock"/></svg></td><td><span class="swatch grey"></span></td><td>27</td><td><label for="l27">ValuesTop</label></td><td><input type="radio" name="layer" id="l27"></td></tr>
              <tr><td><svg class="eye"><use href="#eye"/></svg></td><td><svg class="lock"><use href="#lock"/></svg></td><td><span class="swatch grey"></span></td><td>28</td><td><label for="l28">ValuesBottom</label></td><td><input type="radio" name="layer" id="l28"></td></tr>
              <tr><td><svg class="eye"><use href="#eyeoff"/></svg></td><td><svg class="lock"><use href="#lock"/></svg></td><td><span class="swatch hatch up thin"></span></td><td>29</td><td><label for="l29">SolderMaskTop</label></td><td><input type="radio" name="layer" id="l29"></td></tr>
              <tr><td><svg class="eye"><use href="#eyeoff"/></svg></td><td><svg class="lock"><use href="#lock"/></svg></td><td><span class="swatch hatch down thin"></span></td><td>30</td><td><label for="l30">SolderMaskBottom</label></td><td><input type="radio" name="layer" id="l30"></td></tr>
              <tr><td><svg class="eye"><use href="#eyeoff"/></svg></td><td><svg class="lock"><use href="#lock"/></svg></td><td><span class="swatch hatch up thick"></span></td><td>31</td><td><label for="l31">StencilTop</label></td><td><input type="radio" name="layer" id="l31"></td></tr>
              <tr><td><svg class="eye"><use href="#eyeoff"/></svg></td><td><svg class="lock"><use href="#lock"/></svg></td><td><span class="swatch hatch down thick"></span></td><td>32</td><td><label for="l32">StencilBottom</label></td><td><input type="radio" name="layer" id="l32"></td></tr>
              <tr><td><svg class="eye"><use href="#eyeoff"/></svg></td><td><svg class="lock"><use href="#lock"/></svg></td><td><span class="swatch hatch up thin yellow"></span></td><td>33</td><td><label for="l33">FinishTop</label></td><td><input type="radio" name="layer" id="l33"></td></tr>
            </tbody>
          </table>
        </div>
        <div class="lscroll"><span></span></div>
      </div>
      <div class="list-actions">
        <button type="button" aria-label="Add layer"><svg width="18" height="18"><path d="M9 0v18M0 9h18" stroke="#444" stroke-width="1.800"/></svg></button>
        <button type="button" aria-label="Remove layer"><svg width="16" height="16"><path d="M1 1l14 14M15 1L1 15" stroke="#555" stroke-width="1.500"/></svg></button>
      </div>
    </div>
    <button type="button" class="details"><svg width="10" height="16"><path d="M0 0l10 8-10 8z" fill="#8a8a8a"/></svg><span>Details</span></button>
  </aside>
</main>
</body>
</html>
```
FILE: styles.css
```css
* { box-sizing: border-box; }

body {
  margin: 0;
  height: 100vh;
  display: flex;
  flex-direction: column;
  background: #f1f1f1;
  color: #111;
  font: 14px/20px "Noto Sans", sans-serif;
  overflow: hidden;
}

button {
  display: flex;
  align-items: center;
  justify-content: center;
  margin: 0;
  padding: 0;
  border: 0;
  background: none;
  color: inherit;
  font: inherit;
}

svg { display: block; flex: none; }
.defs { position: absolute; width: 0; height: 0; }

.caret {
  flex: none;
  width: 8px;
  height: 6px;
  margin-left: auto;
  background: #666;
  clip-path: polygon(0 0, 100% 0, 50% 100%);
}

/* Title bar */
.titlebar {
  display: flex;
  align-items: center;
  flex: none;
  height: 29px;
  padding-left: 3px;
  gap: 7px;
  background: linear-gradient(90deg, #e8f4f8, #eaf4f7 60%, #f3f2f0 88%);
}
.titlebar h1 { margin: 0; font-size: 14px; font-weight: 400; color: #000; }
.window-controls { display: flex; margin-left: auto; }
.window-controls button { width: 59px; height: 28px; }
.window-controls button:last-child { width: 61px; }

/* Document tabs */
.tabbar {
  display: flex;
  flex: none;
  align-items: flex-end;
  height: 40px;
  background: #cbcbcb;
}
.quick { display: flex; align-items: center; height: 40px; width: 228px; }
.q-grid { width: 40px; }
.q-file { width: 57px; }
.q-item { width: 41px; }
.home {
  width: 48px;
  height: 35px;
  padding: 4px 0 0 2px;
  background: #bababa;
  border-radius: 6px 6px 0 0;
}
.tabs { flex: 1; display: flex; gap: 5px; margin: 0 6px 0 5px; }
.tab {
  flex: 1;
  display: flex;
  align-items: center;
  height: 35px;
  padding: 0 8px 0 4px;
  background: #bababa;
  border-radius: 6px 6px 0 0;
  color: #6c6c6c;
}
.tab.active { background: #f1f1f1; color: #444; }
.tab-label {
  flex: 1;
  display: flex;
  align-items: center;
  justify-content: center;
  gap: 7px;
  padding-top: 3px;
  font: 15px/20px "Liberation Sans", Arial, sans-serif;
}
.tab button { width: 12px; height: 20px; }
.newtab {
  width: 34px;
  height: 35px;
  background: #bababa;
  border-radius: 6px 6px 0 0;
}
.account { display: flex; align-items: center; height: 40px; padding-left: 4px; }
.account button { width: 41px; }
.account .avatar {
  width: 31px;
  height: 31px;
  margin: 0 16px 0 15px;
  border-radius: 50%;
  background: #ececec;
  color: #444;
  font-family: "Liberation Sans", Arial, sans-serif;
}

/* Menu */
.menu {
  display: flex;
  flex: none;
  gap: 26px;
  height: 29px;
  padding-left: 37px;
  font: 14px/29px "Liberation Sans", Arial, sans-serif;
}
.menu a { padding: 0 15px; color: #3a3a3a; text-decoration: none; }
.menu .current { color: #0e95d5; border-bottom: 3px solid #0696d7; }

/* Ribbon */
.ribbon {
  display: flex;
  flex: none;
  height: 74px;
  border-bottom: 1px solid #cbcbcb;
}
.group {
  display: flex;
  flex-direction: column;
  align-items: center;
  justify-content: space-between;
  padding: 1px 13px 0;
  border-right: 1px solid #cfcfcf;
  margin-bottom: 6px;
}
.group.single { padding: 1px 15px 0; }
.group:first-child { padding: 1px 11px 0 10px; }
.group:last-child { padding-left: 15px; border-right: 0; }
.icons { display: flex; gap: 14px; height: 48px; align-items: center; }
.icons svg { width: 40px; height: 40px; }
.icons .wide { width: 48px; height: 48px; }
.picked { background: #0696d7; }
.label {
  gap: 4px;
  height: 16px;
  padding: 0 2px;
  color: #333;
  font: 14px/16px "Liberation Sans", Arial, sans-serif;
  white-space: nowrap;
}
.label::after {
  content: "";
  width: 7px;
  height: 6px;
  background: #333;
  clip-path: polygon(0 0, 100% 0, 50% 100%);
}

/* Workspace */
.workspace { flex: 1; min-height: 0; display: flex; }
.editor { flex: 1; min-width: 0; display: flex; flex-direction: column; }

.parambar { display: flex; flex: none; align-items: center; height: 46px; padding: 1px 18px 0 10px; color: #222; }
.combo {
  display: flex;
  justify-content: flex-start;
  gap: 9px;
  width: 264px;
  height: 32px;
  padding: 0 6px 0 5px;
  border: 1px solid #a8a8a8;
  background: #fff;
  color: #000;
}
.parambar output { width: 187px; padding-left: 24px; }
.command {
  flex: 1;
  display: flex;
  align-items: center;
  height: 32px;
  padding-right: 6px;
  border: 1px solid #a8a8a8;
}
.command input {
  flex: 1;
  border: 0;
  padding: 0 8px;
  background: none;
  font: inherit;
  outline: 0;
}
.command input::placeholder { color: #bdbdbd; opacity: 1; }

.swatch { display: block; width: 20px; height: 20px; border: 1px solid; border-right-width: 0; }
.combo .swatch { width: 25px; height: 25px; }
.swatch.top { background: #9f0b0b; border-color: #c11212; }
.swatch.bottom { background: #0779b0; border-color: #0f8fd6; }
.swatch.pads { background: #33af7b; border-color: #3fcf93; }
.swatch.unrouted { background: #a09e28; border-color: #b9b83c; }
.swatch.outline { background: #bd9d33; border-color: #dcb63f; }
.swatch.grey { background: #a0a0a0; border-color: #b8b8b8; }
.swatch.hatch { --ink: #a0a0a0; border: 2px solid var(--ink); border-right-width: 1px; }
.swatch.hatch.yellow { --ink: #a0a025; }
.swatch.up.thin { background: repeating-linear-gradient(-45deg, #000 0 5px, var(--ink) 5px 6px); }
.swatch.down.thin { background: repeating-linear-gradient(45deg, #000 0 5px, var(--ink) 5px 6px); }
.swatch.up.thick { background: repeating-linear-gradient(-45deg, #000 0 4px, var(--ink) 4px 6px); }
.swatch.down.thick { background: repeating-linear-gradient(45deg, #000 0 4px, var(--ink) 4px 6px); }

.viewport { flex: 1; display: flex; min-height: 0; }
.canvas { position: relative; flex: 1; background: #272727; }
.board { position: absolute; inset: 0; width: 100%; height: 100%; }
.silk-text, .net-text, .pin-text { font-family: "Liberation Sans", Arial, sans-serif; }
.silk-text { font-size: 46px; fill: #a0a0a0; }
.net-text { font-size: 27px; fill: #b4c6be; }
.pin-text { font-size: 12px; fill: #b8c4be; }
.airwire { fill: none; stroke: #c8c828; stroke-opacity: .85; stroke-width: 1.2; }

.floatbar {
  position: absolute;
  left: 50%;
  bottom: 5px;
  transform: translateX(-50%);
  margin-left: 10px;
  display: flex;
  height: 30px;
  background: #f1f1f1;
}
.floatbar button { width: 33px; height: 30px; }
.floatbar .first { width: 28px; }
.floatbar .last { width: 39px; }

.vscroll { width: 28px; padding-left: 6px; }
.vscroll span { display: block; width: 8px; height: 100%; background: #999; border-radius: 4px; }
.hscroll { position: relative; flex: none; height: 20px; padding: 6px 28px 0 0; }
.hscroll span { display: block; height: 8px; background: #999; }
.badge { position: absolute; right: 11px; top: 0; }
.status {
  flex: none;
  height: 36px;
  padding-left: 3px;
  font: 15px/38px "Liberation Mono", "Courier New", monospace;
}

/* Layers panel */
.panel { width: 470px; display: flex; flex-direction: column; padding-top: 7px; }
.ptabs { display: flex; height: 30px; }
.ptab-active {
  width: 182px;
  justify-content: flex-start;
  gap: 23px;
  padding-left: 13px;
  background: #f5f5f5;
  border-left: 1px solid #c9c9c9;
  color: #333;
  white-space: nowrap;
}
.ptab {
  flex: 1;
  padding-right: 3px;
  background: #d9d9d9;
  border-top: 1px solid #b5b5b5;
  border-left: 2px solid #c6c6c6;
}
.kebab { width: 26px; padding-left: 6px; }

.layerset { display: flex; align-items: center; height: 27px; margin: 13px 18px 8px 12px; color: #000; }
.layerset > span { width: 83px; }
.combo.set { flex: 1; height: 27px; border-color: #c4c4c4; }
.gear { width: 27px; height: 27px; margin-left: 10px; border: 1px solid #bdbdbd; border-radius: 2px; }

.layers {
  flex: 1;
  min-height: 0;
  display: flex;
  flex-direction: column;
  margin: 0 15px 9px 12px;
  border: 1px solid #c9c9c9;
  background: #fff;
}
.scroller { flex: 1; min-height: 0; display: flex; overflow: hidden; }
.list { flex: 1; overflow: hidden; }
.list-head { display: flex; align-items: center; gap: 22px; height: 50px; padding: 0 0 5px 12px; background: #f2f2f2; }
.list table { width: 100%; height: 636px; border-collapse: collapse; table-layout: fixed; }
.list td { padding: 0; color: #000; }
.list td:nth-child(1) { width: 52px; padding-left: 11px; }
.list td:nth-child(2) { width: 37px; }
.list td:nth-child(3) { width: 32px; }
.list td:nth-child(4) { width: 36px; text-align: center; }
.list td:nth-child(6) { width: 29px; }
.list label { display: block; line-height: 16px; padding-left: 1px; }
.eye { width: 20px; height: 14px; }
.lock { width: 18px; height: 18px; }
.list input {
  display: block;
  appearance: none;
  width: 17px;
  height: 17px;
  margin: 0;
  border: 1px solid #c9c9c9;
  border-radius: 50%;
  background: #fff;
}
.list input:checked { background: #67952a; background-clip: content-box; padding: 2px; }
.lscroll { width: 20px; padding-left: 5px; }
.lscroll span { display: block; width: 8px; height: 310px; border-radius: 4px; background: #999; }
.list-actions { display: flex; flex: none; align-items: center; gap: 17px; height: 30px; padding-left: 7px; }

.details {
  flex: none;
  justify-content: flex-start;
  gap: 11px;
  height: 30px;
  margin: 0 18px 15px 15px;
  padding-left: 5px;
  background: #f5f5f5;
  color: #46505e;
  font-weight: 700;
}
```
